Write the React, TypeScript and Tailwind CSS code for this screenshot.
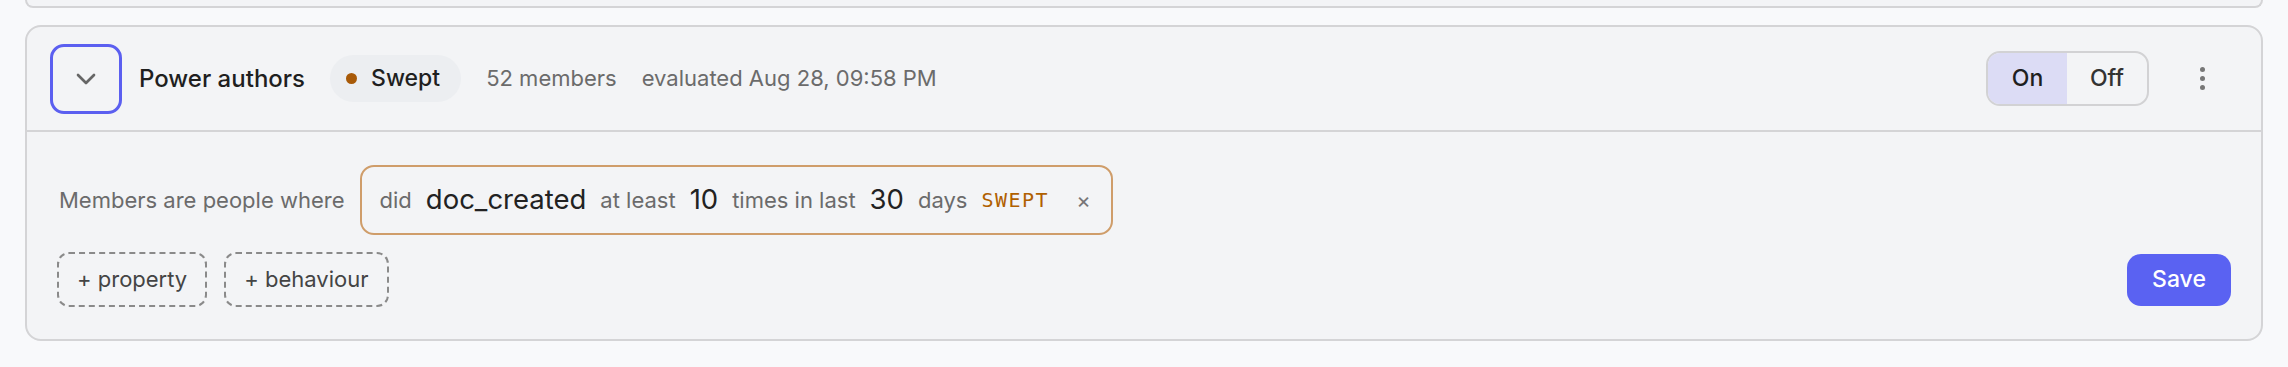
import { ChevronDown } from "lucide-react";

export default function App() {
  return (
    <div className="min-h-screen bg-[#f8f9fb] px-[25px] font-['Inter',sans-serif] text-[#1f1f1f]">
      {/* tail of the previous card */}
      <div className="h-[8px] rounded-b-[16px] border-x-2 border-b-2 border-[#d4d4d6] bg-[#f3f4f6]" />

      <div className="mt-[17px] rounded-[16px] border-2 border-[#d4d4d6] bg-[#f3f4f6]">
        <div className="flex h-[105px] items-center border-b-2 border-[#d4d4d6] pl-[23px] pr-[39px]">
          <button className="flex h-[70px] w-[72px] items-center justify-center rounded-[14px] border-[3px] border-[#5b5ff0] text-[#666]">
            <ChevronDown size={32} strokeWidth={2} />
          </button>
          <span className="ml-[17px] text-[24px] font-medium">Power authors</span>
          <span className="ml-[25px] flex h-[47px] items-center gap-[14px] rounded-full bg-[#eceef1] pl-[16px] pr-[21px] text-[23px] font-medium">
            <span className="h-[11px] w-[11px] rounded-full bg-[#a85a08]" />
            Swept
          </span>
          <span className="ml-[25px] text-[22px] text-[#6b6b6b]">52 members</span>
          <span className="ml-[25px] text-[22px] text-[#6b6b6b]">evaluated Aug 28, 09:58 PM</span>

          <div className="ml-auto flex h-[55px] overflow-hidden rounded-[14px] border-2 border-[#d2d2d4] text-[23px]">
            <button className="w-[79px] bg-[#dcdcf5] font-medium text-[#1f1f1f]">On</button>
            <button className="w-[80px] font-medium text-[#333]">Off</button>
          </div>
          <button className="ml-[33px] flex w-[40px] flex-col items-center gap-[4px]">
            <span className="h-[5px] w-[5px] rounded-full bg-[#777]" />
            <span className="h-[5px] w-[5px] rounded-full bg-[#777]" />
            <span className="h-[5px] w-[5px] rounded-full bg-[#777]" />
          </button>
        </div>

        <div className="flex flex-col gap-[17px] px-[30px] pb-[32px] pt-[33px]">
          <div className="flex items-center">
            <span className="ml-[2px] text-[22px] text-[#6b6b6b]">Members are people where</span>
            <div className="ml-[15px] flex h-[70px] items-center gap-[14px] rounded-[14px] border-2 border-[#cf9d6a] pl-[18px] pr-[20px]">
              <span className="text-[22px] text-[#6b6b6b]">did</span>
              <span className="text-[27.5px] text-[#222]">doc_created</span>
              <span className="text-[22px] text-[#6b6b6b]">at least</span>
              <span className="text-[27.5px] text-[#222]">10</span>
              <span className="text-[22px] text-[#6b6b6b]">times in last</span>
              <span className="text-[27.5px] text-[#222]">30</span>
              <span className="text-[22px] text-[#6b6b6b]">days</span>
              <span className="font-['DejaVu_Sans_Mono',monospace] text-[20px] tracking-[1.5px] text-[#b06000]">SWEPT</span>
              <span className="ml-[13px] text-[22px] text-[#777]">×</span>
            </div>
          </div>

          <div className="flex items-center">
            <button className="h-[55px] rounded-[12px] border-2 border-dashed border-[#8a8a8a] px-[18px] text-[22px] text-[#444]">+ property</button>
            <button className="ml-[17px] h-[55px] rounded-[12px] border-2 border-dashed border-[#8a8a8a] px-[18px] text-[22px] text-[#444]">+ behaviour</button>
            <button className="ml-auto h-[52px] w-[104px] rounded-[14px] bg-[#5a62f2] text-[23px] font-medium text-white">Save</button>
          </div>
        </div>
      </div>
    </div>
  );
}
